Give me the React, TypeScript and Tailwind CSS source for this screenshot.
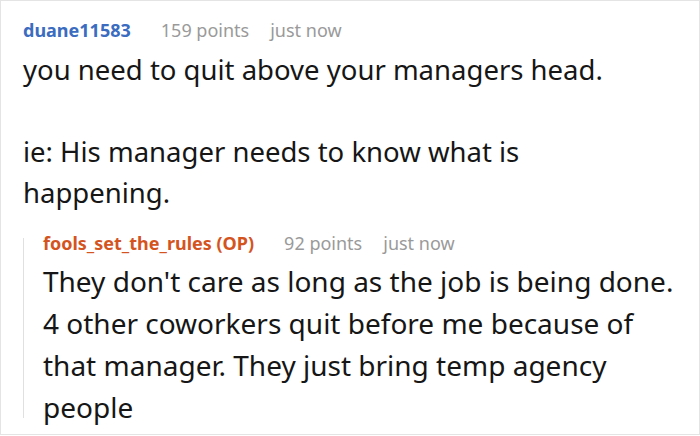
import React from "react";

interface CommentHeaderProps {
  author: string;
  points: number;
  time: string;
  op?: boolean;
}

function CommentHeader({ author, points, time, op }: CommentHeaderProps) {
  return (
    <div className="flex items-center text-[18px] leading-6">
      <span className={`font-bold mr-[30px] ${op ? "text-[#d4541f]" : "text-[#3b6cbf]"}`}>
        {author}
      </span>
      <span className="text-[#9a9a9a] mr-[21px]">{points} points</span>
      <span className="text-[#9a9a9a]">{time}</span>
    </div>
  );
}

export default function App() {
  return (
    <div
      className="w-[700px] h-[435px] overflow-hidden bg-white border border-[#e4e4e4] text-[#161616]"
      style={{ fontFamily: '"Noto Sans", "Open Sans", sans-serif' }}
    >
      <div className="pl-[22px] pt-[17px]">
        <CommentHeader author="duane11583" points={159} time="just now" />
        <div className="mt-[7px] text-[27.5px] leading-[41px]">
          <p>you need to quit above your managers head.</p>
          <p>&nbsp;</p>
          <p>ie: His manager needs to know what is</p>
          <p>happening.</p>
        </div>

        {/* reply thread */}
        <div className="flex mt-[18px]">
          <div className="w-px bg-[#e0e0e0] mt-[7px] mb-[10px]" />
          <div className="pl-[19px]">
            <CommentHeader author="fools_set_the_rules (OP)" points={92} time="just now" op />
            <div className="mt-[5px] text-[28px] leading-[42px]">
              <p>They don't care as long as the job is being done.</p>
              <p>4 other coworkers quit before me because of</p>
              <p>that manager. They just bring temp agency</p>
              <p>people</p>
            </div>
          </div>
        </div>
      </div>
    </div>
  );
}
